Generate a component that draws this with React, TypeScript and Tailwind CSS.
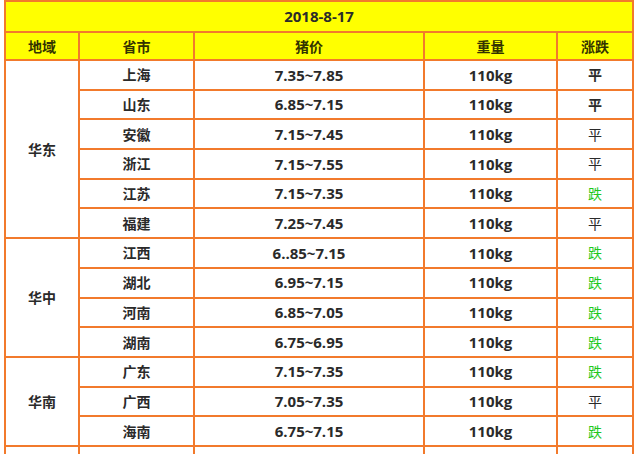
import React from "react";

type Row = { p: string; price: string; t: string; b?: boolean };
const sections: { name: string; rows: Row[] }[] = [
  {
    name: "华东",
    rows: [
      { p: "上海", price: "7.35~7.85", t: "平", b: true },
      { p: "山东", price: "6.85~7.15", t: "平", b: true },
      { p: "安徽", price: "7.15~7.45", t: "平" },
      { p: "浙江", price: "7.15~7.55", t: "平" },
      { p: "江苏", price: "7.15~7.35", t: "跌" },
      { p: "福建", price: "7.25~7.45", t: "平" },
    ],
  },
  {
    name: "华中",
    rows: [
      { p: "江西", price: "6..85~7.15", t: "跌" },
      { p: "湖北", price: "6.95~7.15", t: "跌" },
      { p: "河南", price: "6.85~7.05", t: "跌" },
      { p: "湖南", price: "6.75~6.95", t: "跌" },
    ],
  },
  {
    name: "华南",
    rows: [
      { p: "广东", price: "7.15~7.35", t: "跌" },
      { p: "广西", price: "7.05~7.35", t: "平" },
      { p: "海南", price: "6.75~7.15", t: "跌" },
    ],
  },
];

const cell = "border-2 border-[#f27a2c] text-center align-middle p-0";
const font = { fontFamily: '"Open Sans", "Noto Sans CJK SC", sans-serif' };

export default function App() {
  return (
    <div className="w-[640px] h-[454px] overflow-hidden bg-white pl-[4px]" style={font}>
      <table className="border-collapse table-fixed w-[630px] text-[14px] text-[#2a2a2a]">
        <colgroup>
          <col className="w-[74px]" />
          <col className="w-[115px]" />
          <col className="w-[230px]" />
          <col className="w-[133px]" />
          <col className="w-[76px]" />
        </colgroup>
        <tbody>
          <tr className="h-[31px] bg-[#ffff00]">
            <td colSpan={5} className={`${cell} font-bold text-[15px]`}>2018-8-17</td>
          </tr>
          <tr className="h-[28px] bg-[#ffff00] text-[#333300] font-semibold">
            <td className={cell}>地域</td>
            <td className={cell}>省市</td>
            <td className={cell}>猪价</td>
            <td className={cell}>重量</td>
            <td className={cell}>涨跌</td>
          </tr>
          {sections.map((s) =>
            s.rows.map((r, i) => (
              <tr key={s.name + r.p} className="h-[29.7px]">
                {i === 0 && (
                  <td rowSpan={s.rows.length} className={`${cell} font-semibold`}>
                    {s.name}
                  </td>
                )}
                <td className={`${cell} font-semibold`}>{r.p}</td>
                <td className={`${cell} font-bold text-[15px]`}>{r.price}</td>
                <td className={`${cell} font-bold text-[15px]`}>110kg</td>
                <td
                  className={`${cell} ${r.b ? "font-bold" : "font-normal"} ${
                    r.t === "跌" ? "text-[#1ec81e]" : ""
                  }`}
                >
                  {r.t}
                </td>
              </tr>
            ))
          )}
          <tr className="h-[29.7px]">
            <td className={cell}></td>
            <td className={cell}></td>
            <td className={cell}></td>
            <td className={cell}></td>
            <td className={cell}></td>
          </tr>
        </tbody>
      </table>
    </div>
  );
}
